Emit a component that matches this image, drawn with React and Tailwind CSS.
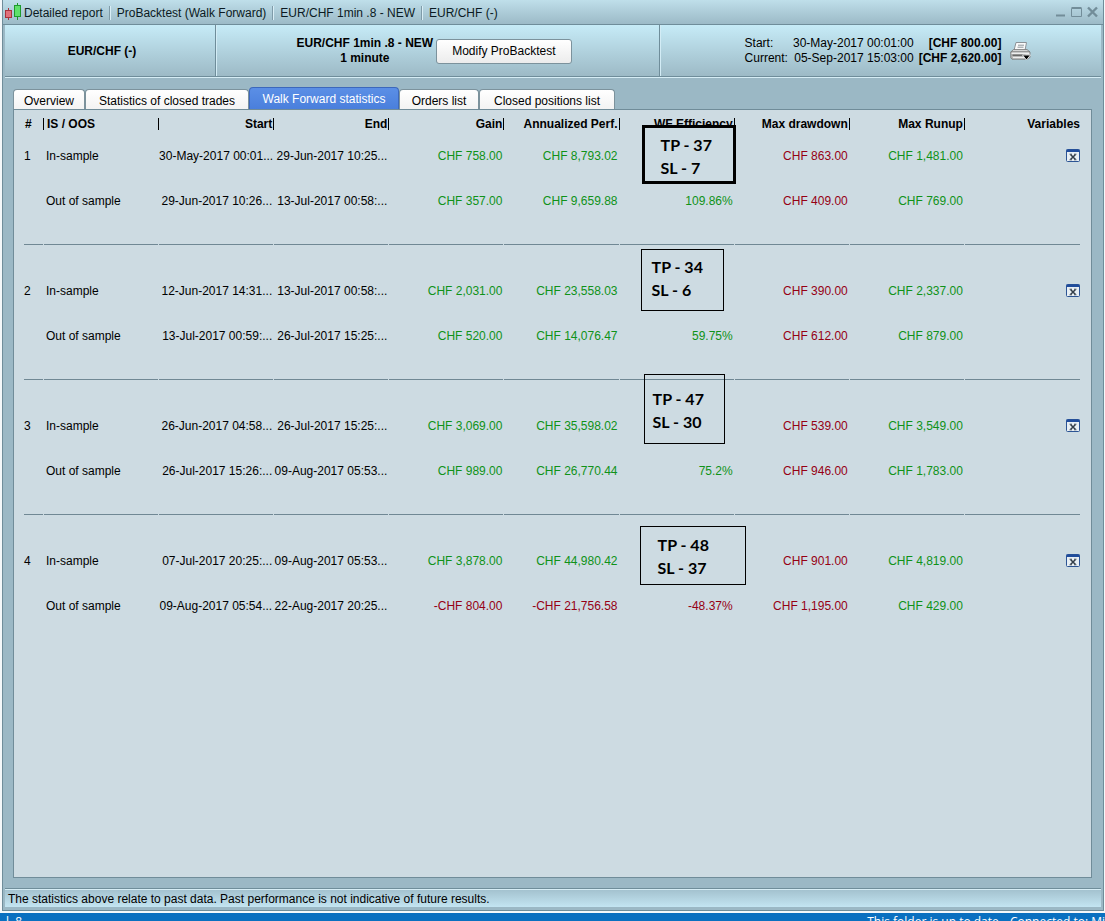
import React from "react";

const groups = [
  {
    n: 1,
    note: { tp: 37, sl: 7, box: "left-[22px] -top-[9px] w-[94px] h-[59px] pl-[16px] pt-[5px] border-[3px] bg-[#cddce3]" },
    rows: [
      ["In-sample", "30-May-2017 00:01...", "29-Jun-2017 10:25...", "CHF 758.00", "CHF 8,793.02", "", "CHF 863.00", "CHF 1,481.00"],
      ["Out of sample", "29-Jun-2017 10:26...", "13-Jul-2017 00:58:...", "CHF 357.00", "CHF 9,659.88", "109.86%", "CHF 409.00", "CHF 769.00"],
    ],
  },
  {
    n: 2,
    note: { tp: 34, sl: 6, box: "left-[21px] -top-[20px] w-[83px] h-[62px] pl-[10px] pt-[5px] border" },
    rows: [
      ["In-sample", "12-Jun-2017 14:31...", "13-Jul-2017 00:58:...", "CHF 2,031.00", "CHF 23,558.03", "", "CHF 390.00", "CHF 2,337.00"],
      ["Out of sample", "13-Jul-2017 00:59:...", "26-Jul-2017 15:25:...", "CHF 520.00", "CHF 14,076.47", "59.75%", "CHF 612.00", "CHF 879.00"],
    ],
  },
  {
    n: 3,
    note: { tp: 47, sl: 30, box: "left-[24px] -top-[30px] w-[81px] h-[70px] pl-[8px] pt-[12px] border" },
    rows: [
      ["In-sample", "26-Jun-2017 04:58...", "26-Jul-2017 15:25:...", "CHF 3,069.00", "CHF 35,598.02", "", "CHF 539.00", "CHF 3,549.00"],
      ["Out of sample", "26-Jul-2017 15:26:...", "09-Aug-2017 05:53...", "CHF 989.00", "CHF 26,770.44", "75.2%", "CHF 946.00", "CHF 1,783.00"],
    ],
  },
  {
    n: 4,
    note: { tp: 48, sl: 37, box: "left-[20px] -top-[13px] w-[106px] h-[59px] pl-[17px] pt-[6px] border" },
    rows: [
      ["In-sample", "07-Jul-2017 20:25:...", "09-Aug-2017 05:53...", "CHF 3,878.00", "CHF 44,980.42", "", "CHF 901.00", "CHF 4,819.00"],
      ["Out of sample", "09-Aug-2017 05:54...", "22-Aug-2017 20:25...", "-CHF 804.00", "-CHF 21,756.58", "-48.37%", "CHF 1,195.00", "CHF 429.00"],
    ],
  },
];

const headers = ["Start", "End", "Gain", "Annualized Perf.", "WF Efficiency", "Max drawdown", "Max Runup"];

const tabs = [
  { label: "Overview", width: "min-w-[72px]" },
  { label: "Statistics of closed trades", width: "min-w-[164px]" },
  { label: "Walk Forward statistics", width: "min-w-[150px]", active: true },
  { label: "Orders list", width: "min-w-[80px]" },
  { label: "Closed positions list", width: "min-w-[136px]" },
];

function colorFor(col, value) {
  if (col < 3) return "text-black";
  if (col === 6 || value.startsWith("-")) return "text-[#960014]";
  return "text-[#0f9218]";
}

function CandlesIcon() {
  return (
    <svg width="17" height="18" viewBox="0 0 17 18" aria-hidden="true">
      <path d="M3.5 5v12" stroke="#a8323c" />
      <rect x="0.5" y="7.5" width="6" height="7" fill="#e0707a" stroke="#a8323c" />
      <path d="M12.5 0v17" stroke="#1e9a2c" />
      <rect x="9.5" y="2.5" width="6" height="11" fill="#5fe06a" stroke="#1e9a2c" />
    </svg>
  );
}

function PrinterIcon() {
  return (
    <svg width="21" height="20" viewBox="0 0 21 20" aria-hidden="true">
      <path d="M6 1.5h10.5L15 9.5H4z" fill="#fafafa" stroke="#8b9196" />
      <path d="M8 4.2h6M7.5 6.2h6" stroke="#8f959a" />
      <path d="M3.5 8.5h13.5l3 2.5H.8z" fill="#d4d4d4" stroke="#777" strokeWidth=".8" />
      <path d="M.8 11h19.2v5.2l-2 2H2l-1.2-1.5z" fill="#b9b9b9" stroke="#747474" strokeWidth=".8" />
      <path d="M1.5 12.2h17.8" stroke="#f4f4f4" strokeWidth="1.4" />
      <path d="M2.5 14.2h13" stroke="#555" strokeWidth="1.2" />
      <path d="M3 16.6h11" stroke="#eee" strokeWidth="1.2" />
      <path d="M12.5 14h8l-4 5z" fill="#000" stroke="#fff" strokeWidth=".8" />
    </svg>
  );
}

function VariablesIcon() {
  return (
    <svg width="14" height="13" viewBox="0 0 14 13" aria-hidden="true">
      <rect x=".5" y=".5" width="13" height="12" rx="1" fill="#e8eff4" stroke="#2c5494" />
      <path d="M.5 .5h13v2.5H.5z" fill="#1f4c9c" />
      <path d="M4.5 5.5l5 5M9.5 5.5l-5 5" stroke="#333d48" strokeWidth="1.5" />
      <path d="M3.5 5.2h2.5M8 5.2h2.5M3.5 10.8h2.5M8 10.8h2.5" stroke="#333d48" strokeWidth=".8" />
    </svg>
  );
}

function Divider() {
  return <span className="mx-[6px] h-[14px] w-[2px] border-l border-[#7f9ba8] bg-[#d9eef6]" />;
}

function TitleBar() {
  return (
    <header className="flex h-[25px] shrink-0 items-center border-b border-[#6f8d9a] bg-linear-to-b from-[#bfdfea] to-[#9cbac7] pl-[2px] pr-[5px] text-[#0b1a22]">
      <CandlesIcon />
      <h1 className="flex items-center whitespace-nowrap pt-[2px] pl-[2px]">
        <span>Detailed report</span>
        <Divider />
        <span>ProBacktest (Walk Forward)</span>
        <Divider />
        <span>EUR/CHF 1min .8 - NEW</span>
        <Divider />
        <span>EUR/CHF (-)</span>
      </h1>
      <div className="ml-auto flex gap-[5px] text-[#728d99]">
        <button type="button" aria-label="Minimize">
          <svg width="11" height="12" viewBox="0 0 11 12"><path d="M1 9.5h9" stroke="currentColor" strokeWidth="2" /></svg>
        </button>
        <button type="button" aria-label="Maximize">
          <svg width="11" height="12" viewBox="0 0 11 12"><path d="M1 2.5h9.5v8H.5v-8" fill="none" stroke="currentColor" /><path d="M.5 2h10" stroke="currentColor" strokeWidth="2" /></svg>
        </button>
        <button type="button" aria-label="Close">
          <svg width="11" height="12" viewBox="0 0 11 12"><path d="M1 1.5l9 9M10 1.5l-9 9" stroke="currentColor" strokeWidth="2.4" /></svg>
        </button>
      </div>
    </header>
  );
}

function Summary() {
  return (
    <section className="mx-[2px] grid h-[52px] shrink-0 grid-cols-[211fr_444fr_441fr] border-b border-[#6f8d9a] bg-linear-to-b from-[#c6ebf7] to-[#9dbac6] leading-[15px] shadow-[0_1px_0_#d6edf5]">
      <div className="flex items-center justify-center border-r border-[#6f8d9a] pt-px pr-4 font-bold">EUR/CHF (-)</div>
      <div className="flex items-center justify-center gap-[3px] border-l border-r border-l-[#d3ecf5] border-r-[#6f8d9a] pt-px pr-2">
        <p className="text-center font-bold">EUR/CHF 1min .8 - NEW<br />1 minute</p>
        <button type="button" className="h-[25px] rounded-[3px] border border-[#7c929c] bg-linear-to-b from-white to-[#ececec] px-[15px]">
          Modify ProBacktest
        </button>
      </div>
      <div className="flex items-center justify-center gap-[9px] border-l border-[#d3ecf5] pt-px pl-[14px]">
        <dl className="grid grid-cols-[auto_auto_auto] gap-x-[5px] whitespace-nowrap">
          <dt>Start:</dt>
          <dd className="text-right">30-May-2017 00:01:00</dd>
          <dd className="text-right font-bold">[CHF 800.00]</dd>
          <dt>Current:</dt>
          <dd className="text-right">05-Sep-2017 15:03:00</dd>
          <dd className="text-right font-bold">[CHF 2,620.00]</dd>
        </dl>
        <button type="button" aria-label="Print"><PrinterIcon /></button>
      </div>
    </section>
  );
}

function Tabs() {
  return (
    <nav role="tablist" className="flex h-[32px] shrink-0 items-end pl-[10px] whitespace-nowrap">
      {tabs.map((t) => (
        <button
          key={t.label}
          type="button"
          role="tab"
          aria-selected={!!t.active}
          className={`${t.width} rounded-t-[4px] border border-b-0 ${
            t.active
              ? "h-[22px] border-[#3d68bb] bg-linear-to-b from-[#5b8fe6] to-[#4a7fdc] pt-px text-white"
              : "h-[20px] border-[#7c929c] bg-linear-to-b from-white to-[#f3f3f3] pt-[2px]"
          }`}
        >
          {t.label}
        </button>
      ))}
    </nav>
  );
}

function Note({ note }) {
  return (
    <p className={`absolute border-black text-left font-[Lato,sans-serif] text-base leading-[23px] font-bold whitespace-nowrap text-black ${note.box}`}>
      TP - {note.tp}<br />SL - {note.sl}
    </p>
  );
}

function StatsTable() {
  return (
    <table className="w-full table-fixed border-collapse whitespace-nowrap">
      <colgroup>
        <col className="w-[20px]" />
        {Array.from({ length: 9 }, (_, i) => <col key={i} />)}
      </colgroup>
      <thead>
        <tr className="h-[24px] leading-[12px]">
          <th className="p-0 pt-[4px] text-left"><span className="block border-r border-black pl-px">#</span></th>
          <th className="p-0 pt-[4px] text-left"><span className="block border-r border-black pl-[3px]">IS / OOS</span></th>
          {headers.map((h) => (
            <th key={h} className="p-0 pt-[4px] text-right"><span className="block border-r border-black pr-px">{h}</span></th>
          ))}
          <th className="p-0 pt-[4px] text-right">Variables</th>
        </tr>
      </thead>
      {groups.map((g) => (
        <tbody key={g.n}>
          {g.rows.map((row, r) => (
            <tr key={row[0]} className="h-[45px]">
              <td className="p-0 pb-[2px]">{r === 0 ? g.n : ""}</td>
              {row.map((v, c) => (
                <td key={c} className={`relative p-0 pb-[2px] ${c === 0 ? "pl-[2px]" : "pr-[2px] text-right"} ${colorFor(c, v)}`}>
                  {r === 0 && c === 5 ? <Note note={g.note} /> : v}
                </td>
              ))}
              <td className="p-0 pb-[2px]">
                {r === 0 && (
                  <button type="button" aria-label={`Variables ${g.n}`} className="ml-auto block"><VariablesIcon /></button>
                )}
              </td>
            </tr>
          ))}
          {g.n < 4 && (
            <tr className="h-[45px]">
              {Array.from({ length: 10 }, (_, i) => (
                <td key={i} className="p-0 pt-5 align-top"><div className={i < 9 ? "mr-px h-px bg-[#708894]" : "h-px bg-[#708894]"} /></td>
              ))}
            </tr>
          )}
        </tbody>
      ))}
    </table>
  );
}

export default function App() {
  return (
    <div className="flex min-h-screen flex-col bg-[#f4f8fa] font-['Liberation_Sans',Arial,sans-serif] text-xs text-black [&_button]:cursor-pointer">
      <div className="ml-[2px] mr-px flex flex-1 flex-col border-x border-b border-[#6f8d9a] bg-[#9bb8c5]">
        <TitleBar />
        <Summary />
        <Tabs />
        <main className="mr-[11px] ml-[10px] flex-1 border border-[#708c99] bg-[#cddbe2] pr-[11px] pl-[10px]">
          <StatsTable />
        </main>
        <footer className="mx-[2px] mt-[10px] mb-[3px] h-[19px] shrink-0 border-t border-[#6f8d9a] bg-linear-to-b from-[#a2c0cd] to-[#c3e5f2] pl-[3px] leading-[20px] shadow-[inset_0_1px_0_#d6edf5]">
          The statistics above relate to past data. Past performance is not indicative of future results.
        </footer>
      </div>
      <div className="mt-[2px] flex h-[8px] shrink-0 justify-between overflow-hidden bg-[#0a70c0] pl-[6px] font-['Open_Sans',sans-serif] leading-[18px] whitespace-nowrap text-white">
        <span>l&nbsp; 8</span>
        <span className="flex gap-[8px]">
          <span>This folder is up to date.</span>
          <span>Connected to: Mi</span>
        </span>
      </div>
    </div>
  );
}
